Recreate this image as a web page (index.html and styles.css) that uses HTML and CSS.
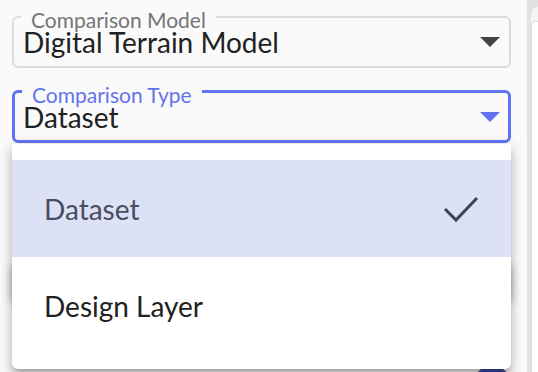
FILE: index.html
```html
<!DOCTYPE html>
<html lang="en">
<head>
    <meta charset="UTF-8">
    <meta name="viewport" content="width=device-width, initial-scale=1.0">
    <title>Comparison settings</title>
    <link rel="stylesheet" href="styles.css">
</head>
<body>
    <div class="page">
        <div class="panel">
            <fieldset class="field">
                <legend>Comparison Model</legend>
                <div class="field-value">
                    <span>Digital Terrain Model</span>
                    <span class="arrow"></span>
                </div>
            </fieldset>

            <div class="select">
                <fieldset class="field field-focused">
                    <legend>Comparison Type</legend>
                    <div class="field-value">
                        <span>Dataset</span>
                        <span class="arrow"></span>
                    </div>
                </fieldset>

                <ul class="menu">
                    <li class="menu-item selected">
                        <span>Dataset</span>
                        <svg class="check" width="36" height="28" viewBox="0 0 36 28">
                            <polyline points="2,14 13,25 34,3" fill="none" stroke="currentColor" stroke-width="3"/>
                        </svg>
                    </li>
                    <li class="menu-item">
                        <span>Design Layer</span>
                    </li>
                </ul>
            </div>

            <!-- covered by the open menu -->
            <div class="hidden-card"></div>
            <div class="fab"></div>
        </div>

        <div class="side">
            <div class="side-card">
                <div class="side-inner"></div>
            </div>
        </div>
    </div>
</body>
</html>
```

FILE: styles.css
```css
body {
    margin: 0;
    background-color: #fafafa;
    font-family: Lato, "Open Sans", sans-serif;
    color: #212121;
    overflow: hidden;
}

.page {
    display: flex;
    height: 372px;
    overflow: hidden;
}

.panel {
    width: 499px;
    padding: 3px 0 0 12px;
}

.field {
    margin: 0;
    padding: 0 9px 10px 9px;
    border: 2px solid #dcdcdc;
    border-radius: 6px;
    min-width: 0;
}

.field legend {
    margin-left: -2px;
    padding: 6px 10px 0;
    font-size: 21px;
    line-height: 21px;
    color: #757575;
}

.field-value {
    display: flex;
    justify-content: space-between;
    align-items: center;
    margin-top: -2px;
    font-size: 28px;
    line-height: 28px;
}

.arrow {
    width: 0;
    height: 0;
    border-left: 10px solid transparent;
    border-right: 10px solid transparent;
    border-top: 10px solid #444;
}

.select {
    position: relative;
    margin-top: 10px;
}

.field-focused {
    padding: 0 8px 9px 8px;
    border: 3px solid #6373f0;
}

.field-focused legend {
    margin-left: -1px;
    color: #6373f0;
}

.field-focused .arrow {
    border-top-color: #6373f0;
}

.menu {
    position: absolute;
    top: calc(100% + 1px);
    left: 0;
    right: 0;
    z-index: 10;
    margin: 0;
    padding: 16px 0 15px;
    list-style: none;
    background: #fff;
    border-radius: 0 0 6px 6px;
    box-shadow: 0 5px 5px -3px rgba(0, 0, 0, 0.2),
                0 8px 10px 1px rgba(0, 0, 0, 0.14),
                0 3px 14px 2px rgba(0, 0, 0, 0.12);
}

.menu-item {
    display: flex;
    justify-content: space-between;
    align-items: center;
    height: 97px;
    padding: 0 32px 0 32px;
    font-size: 28px;
    color: #212121;
}

.menu-item.selected {
    background: #dde1f5;
    color: #474d63;
}

.check {
    color: #3e4356;
}

.hidden-card {
    height: 36px;
    margin-top: 121px;
    background: #fff;
    border-radius: 4px;
    box-shadow: 0 2px 8px rgba(0, 0, 0, 0.35);
}

.fab {
    width: 40px;
    height: 40px;
    margin: 66px 0 0 460px;
    border-radius: 50%;
    background: #3949ab;
}

.side {
    flex: 1;
    margin-left: 16px;
    padding: 7px 0 0 4px;
    background: #e2e2e2;
}

.side-card {
    height: 100%;
    padding-top: 14px;
    background: #f4f4f4;
    border-radius: 7px 0 0 0;
}

.side-inner {
    height: 100%;
    background: #fff;
    border-top: 1px solid #dcdcdc;
    border-left: 1px solid #dcdcdc;
    border-radius: 5px 0 0 0;
}
```
